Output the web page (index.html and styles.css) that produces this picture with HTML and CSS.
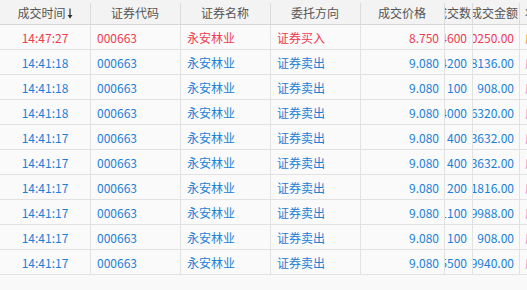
FILE: index.html
```html
<!DOCTYPE html>
<html lang="zh-CN">
<head>
<meta charset="utf-8">
<title>成交</title>
<link rel="stylesheet" href="styles.css">
</head>
<body>
<div class="grid">
  <div class="hd c-time"><span>成交时间</span><svg class="sort" width="6" height="11" viewBox="0 0 6 11"><path d="M3 0.5V9.5" stroke="#333" stroke-width="1.2" fill="none"/><path d="M0.5 7L3 10.5L5.5 7Z" fill="#333"/></svg></div>
  <div class="hd"><span>证券代码</span></div>
  <div class="hd"><span>证券名称</span></div>
  <div class="hd"><span>委托方向</span></div>
  <div class="hd"><span>成交价格</span></div>
  <div class="hd hd-r"><span>成交数</span></div>
  <div class="hd hd-r"><span>成交金额</span></div>
  <div class="hd hd-l"><span>状态</span></div>

  <div class="c ctr red">14:47:27</div><div class="c lft red">000663</div><div class="c lft red">永安林业</div><div class="c lft red">证券买入</div><div class="c rgt red">8.750</div><div class="c rgt red">4600</div><div class="c rgt red">40250.00</div><div class="c lft org">成交</div>
  <div class="c ctr blue">14:41:18</div><div class="c lft blue">000663</div><div class="c lft blue">永安林业</div><div class="c lft blue">证券卖出</div><div class="c rgt blue">9.080</div><div class="c rgt blue">4200</div><div class="c rgt blue">38136.00</div><div class="c lft pink">成交</div>
  <div class="c ctr blue">14:41:18</div><div class="c lft blue">000663</div><div class="c lft blue">永安林业</div><div class="c lft blue">证券卖出</div><div class="c rgt blue">9.080</div><div class="c rgt blue">100</div><div class="c rgt blue">908.00</div><div class="c lft pink">成交</div>
  <div class="c ctr blue">14:41:18</div><div class="c lft blue">000663</div><div class="c lft blue">永安林业</div><div class="c lft blue">证券卖出</div><div class="c rgt blue">9.080</div><div class="c rgt blue">4000</div><div class="c rgt blue">36320.00</div><div class="c lft pink">成交</div>
  <div class="c ctr blue">14:41:17</div><div class="c lft blue">000663</div><div class="c lft blue">永安林业</div><div class="c lft blue">证券卖出</div><div class="c rgt blue">9.080</div><div class="c rgt blue">400</div><div class="c rgt blue">3632.00</div><div class="c lft pink">成交</div>
  <div class="c ctr blue">14:41:17</div><div class="c lft blue">000663</div><div class="c lft blue">永安林业</div><div class="c lft blue">证券卖出</div><div class="c rgt blue">9.080</div><div class="c rgt blue">400</div><div class="c rgt blue">3632.00</div><div class="c lft pink">成交</div>
  <div class="c ctr blue">14:41:17</div><div class="c lft blue">000663</div><div class="c lft blue">永安林业</div><div class="c lft blue">证券卖出</div><div class="c rgt blue">9.080</div><div class="c rgt blue">200</div><div class="c rgt blue">1816.00</div><div class="c lft pink">成交</div>
  <div class="c ctr blue">14:41:17</div><div class="c lft blue">000663</div><div class="c lft blue">永安林业</div><div class="c lft blue">证券卖出</div><div class="c rgt blue">9.080</div><div class="c rgt blue">1100</div><div class="c rgt blue">9988.00</div><div class="c lft pink">成交</div>
  <div class="c ctr blue">14:41:17</div><div class="c lft blue">000663</div><div class="c lft blue">永安林业</div><div class="c lft blue">证券卖出</div><div class="c rgt blue">9.080</div><div class="c rgt blue">100</div><div class="c rgt blue">908.00</div><div class="c lft pink">成交</div>
  <div class="c ctr blue">14:41:17</div><div class="c lft blue">000663</div><div class="c lft blue">永安林业</div><div class="c lft blue">证券卖出</div><div class="c rgt blue">9.080</div><div class="c rgt blue">5500</div><div class="c rgt blue">49940.00</div><div class="c lft pink">成交</div>
</div>
</body>
</html>
```
FILE: styles.css
```css
html, body {
  margin: 0;
  padding: 0;
  background: #f9f9f9;
  width: 527px;
  height: 290px;
  overflow: hidden;
}

.grid {
  display: grid;
  grid-template-columns: 90px 90px 90px 90px 84px 28px 47px 8px;
  grid-auto-rows: 25px;
  width: 527px;
  font-family: "Noto Sans CJK SC", "Noto Sans", sans-serif;
  font-size: 12px;
}

.hd {
  background: #f3f3f3;
  color: #555;
  display: flex;
  align-items: center;
  justify-content: center;
  overflow: hidden;
  white-space: nowrap;
  border-bottom: 1px solid #d6d6d6;
  box-sizing: border-box;
  position: relative;
  padding-top: 1px;
}

.hd + .hd::before {
  content: "";
  position: absolute;
  left: 0;
  top: 3px;
  bottom: 0;
  width: 1px;
  background: #dcdcdc;
}

.hd span { flex: none; }

.hd-r { justify-content: flex-end; padding-right: 1px; }
.hd-l { justify-content: flex-start; padding-left: 6px; }

.c-time .sort { flex: none; margin-left: 1px; margin-top: 2px; }

.c {
  display: flex;
  align-items: center;
  overflow: hidden;
  white-space: nowrap;
  box-sizing: border-box;
  border-bottom: 1px solid #e2e2e2;
  border-left: 1px solid #e2e2e2;
  background: #fafafa;
}

.c:nth-child(8n+1) { border-left: none; }

.ctr { justify-content: center; }
.lft { justify-content: flex-start; padding-left: 6px; }
.rgt { justify-content: flex-end; padding-right: 5px; }

.red { color: #ef3b52; }
.blue { color: #1c80d6; }
.org { color: #f0962e; padding-left: 5px; }
.pink { color: #e88cc0; padding-left: 5px; }
```
